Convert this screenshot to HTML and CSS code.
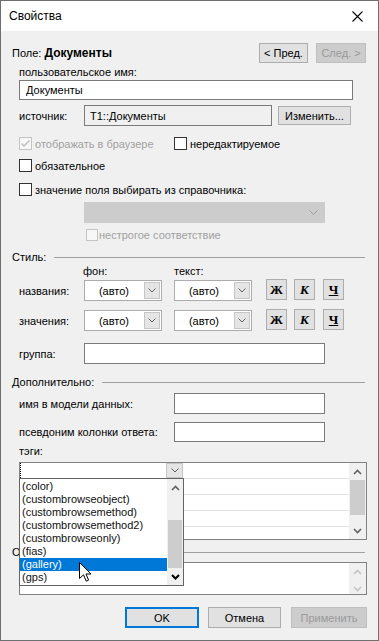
FILE: index.html
```html
<!DOCTYPE html>
<html lang="ru">
<head>
	<meta charset="UTF-8">
	<title>Свойства</title>
	<link rel="stylesheet" href="styles.css">
</head>
<body>
<div class="window">
	<div class="titlebar">
		<span class="title">Свойства</span>
		<span class="close"><svg width="11" height="11" viewBox="0 0 11 11"><path d="M0.5 0.5L10.5 10.5M10.5 0.5L0.5 10.5" stroke="#000" stroke-width="1.1"/></svg></span>
	</div>
	<div class="content">
		<div class="row r-head">
			<span class="field">Поле: <b>Документы</b></span>
			<button class="btn b-prev" type="button">&lt; Пред.</button>
			<button class="btn b-next" type="button" disabled>След. &gt;</button>
		</div>

		<div class="row r-name-label indent">пользовательское имя:</div>
		<div class="row r-name indent"><input class="edit e-name" type="text" value="Документы"></div>

		<div class="row r-source indent">
			<span class="lbl">источник:</span>
			<input class="edit e-source" type="text" value="T1::Документы" readonly>
			<button class="btn b-change" type="button">Изменить...</button>
		</div>

		<div class="row r-chk1 indent">
			<span class="chk w155 off"><span class="box dis"><svg width="11" height="11" viewBox="0 0 11 11"><path d="M1.5 5.5L4 8L9.5 2.5" fill="none" stroke="#bcbcbc" stroke-width="1.4"/></svg></span>отображать в браузере</span>
			<span class="chk"><span class="box"></span>нередактируемое</span>
		</div>
		<div class="row r-chk2 indent">
			<span class="chk"><span class="box"></span>обязательное</span>
		</div>
		<div class="row r-chk3 indent">
			<span class="chk"><span class="box"></span>значение поля выбирать из справочника:</span>
		</div>
		<div class="row r-lookup">
			<span class="sel sel-dis"><span class="sel-text"></span><svg width="9" height="5" viewBox="0 0 9 5"><path d="M0.5 0.5L4.5 4.5L8.5 0.5" fill="none" stroke="#9c9c9c"/></svg></span>
		</div>
		<div class="row r-strict">
			<span class="chk off"><span class="box box-sm dis"></span>нестрогое соответствие</span>
		</div>

		<div class="row sect r-style-h">Стиль:</div>
		<div class="row r-cols">
			<span class="col-bg">фон:</span>
			<span>текст:</span>
		</div>
		<div class="row r-sel r-sel1 indent">
			<span class="lbl">названия:</span>
			<span class="sel"><span class="sel-text">(авто)</span><span class="sel-btn"><svg width="8" height="5" viewBox="0 0 8 5"><path d="M0.5 0.5L4 4L7.5 0.5" fill="none" stroke="#606060"/></svg></span></span>
			<span class="sel sel2"><span class="sel-text">(авто)</span><span class="sel-btn"><svg width="8" height="5" viewBox="0 0 8 5"><path d="M0.5 0.5L4 4L7.5 0.5" fill="none" stroke="#606060"/></svg></span></span>
			<span class="fmt f-b">Ж</span>
			<span class="fmt f-i">К</span>
			<span class="fmt f-u">Ч</span>
		</div>
		<div class="row r-sel r-sel2 indent">
			<span class="lbl">значения:</span>
			<span class="sel"><span class="sel-text">(авто)</span><span class="sel-btn"><svg width="8" height="5" viewBox="0 0 8 5"><path d="M0.5 0.5L4 4L7.5 0.5" fill="none" stroke="#606060"/></svg></span></span>
			<span class="sel sel2"><span class="sel-text">(авто)</span><span class="sel-btn"><svg width="8" height="5" viewBox="0 0 8 5"><path d="M0.5 0.5L4 4L7.5 0.5" fill="none" stroke="#606060"/></svg></span></span>
			<span class="fmt f-b">Ж</span>
			<span class="fmt f-i">К</span>
			<span class="fmt f-u">Ч</span>
		</div>
		<div class="row r-group indent">
			<span class="lbl">группа:</span>
			<input class="edit e-group" type="text">
		</div>

		<div class="row sect r-extra-h">Дополнительно:</div>
		<div class="row r-model indent">
			<span class="lbl-wide">имя в модели данных:</span>
			<input class="edit e-model" type="text">
		</div>
		<div class="row r-alias indent">
			<span class="lbl-wide">псевдоним колонки ответа:</span>
			<input class="edit e-model" type="text">
		</div>
		<div class="row r-tags-h indent">тэги:</div>

		<div class="grid-wrap indent">
			<div class="grid">
				<div class="grid-rows">
					<div class="grow">
						<span class="combo"><span class="combo-text"></span><span class="combo-btn"><svg width="8" height="5" viewBox="0 0 8 5"><path d="M0.5 0.5L4 4L7.5 0.5" fill="none" stroke="#606060"/></svg></span></span>
					</div>
					<div class="grow"></div>
					<div class="grow"></div>
					<div class="grow"></div>
					<div class="grow last"></div>
				</div>
				<div class="vscroll">
					<span class="arr"><svg width="9" height="6" viewBox="0 0 9 6"><path d="M1 5L4.5 1.5L8 5" fill="none" stroke="#606060" stroke-width="1.6"/></svg></span>
					<span class="track"><span class="thumb"></span></span>
					<span class="arr"><svg width="9" height="6" viewBox="0 0 9 6"><path d="M1 1L4.5 4.5L8 1" fill="none" stroke="#606060" stroke-width="1.6"/></svg></span>
				</div>

				<div class="dropdown">
					<div class="items">
						<div class="item">(color)</div>
						<div class="item">(custombrowseobject)</div>
						<div class="item">(custombrowsemethod)</div>
						<div class="item">(custombrowsemethod2)</div>
						<div class="item">(custombrowseonly)</div>
						<div class="item">(fias)</div>
						<div class="item sel-item">(gallery)</div>
						<div class="item">(gps)</div>
					</div>
					<div class="dscroll">
						<span class="darr"><svg width="9" height="6" viewBox="0 0 9 6"><path d="M1 5L4.5 1.5L8 5" fill="none" stroke="#606060" stroke-width="1.6"/></svg></span>
						<span class="dtrack"><span class="dthumb"></span></span>
						<span class="darr"><svg width="9" height="6" viewBox="0 0 9 6"><path d="M1 1L4.5 4.5L8 1" fill="none" stroke="#000" stroke-width="2"/></svg></span>
					</div>
				</div>
				<svg class="cursor" width="13" height="20" viewBox="0 0 13 20"><path d="M0.5 0.5L0.5 16.5L4.5 12.8L7.2 19.2L9.6 18.2L7 12L12 12Z" fill="#fff" stroke="#000" stroke-width="1"/></svg>
			</div>
		</div>

		<!-- подпись группы закрыта раскрытым списком тэгов -->
		<div class="row sect r-desc-h">Описание:</div>
		<div class="memo-wrap indent">
			<div class="memo">
				<div class="memo-text"></div>
				<div class="mscroll">
					<span class="arr"><svg width="9" height="6" viewBox="0 0 9 6"><path d="M1 5L4.5 1.5L8 5" fill="none" stroke="#c4c4c4" stroke-width="1.6"/></svg></span>
					<span class="arr"><svg width="9" height="6" viewBox="0 0 9 6"><path d="M1 1L4.5 4.5L8 1" fill="none" stroke="#c4c4c4" stroke-width="1.6"/></svg></span>
				</div>
			</div>
		</div>

		<div class="row r-buttons">
			<button class="btn b-ok" type="button">OK</button>
			<button class="btn b-cancel" type="button">Отмена</button>
			<button class="btn b-apply" type="button" disabled>Применить</button>
		</div>
	</div>
</div>
</body>
</html>
```

FILE: styles.css
```css
* {
	box-sizing: border-box;
}
body {
	margin: 0;
	font-family: "Liberation Sans", Arial, sans-serif;
	font-size: 11px;
	color: #000;
	background: #fff;
}
.window {/*окно диалога*/
	width: 379px;
	height: 641px;
	border: 1px solid #6f6f6f;
	background: #f0f0f0;
	display: flex;
	flex-direction: column;
}
.titlebar {
	height: 30px;
	flex: none;
	background: #fff;
	display: flex;
	align-items: center;
	justify-content: space-between;
	padding-left: 8px;
}
.title {
	font-size: 12px;
}
.close {
	width: 42px;
	height: 30px;
	display: flex;
	align-items: center;
	justify-content: center;
}
.content {
	padding: 0 11px;
}
.row {
	display: flex;
	align-items: center;
	white-space: nowrap;
}
.indent {
	padding-left: 7px;
}

/* кнопки */
.btn {
	font-family: inherit;
	font-size: 11px;
	color: #000;
	background: #e1e1e1;
	border: 1px solid #adadad;
	padding: 0;
	margin: 0;
	height: 20px;
}
.btn:disabled {
	background: #cccccc;
	border-color: #bfbfbf;
	color: #9a9a9a;
}

/* поля ввода */
.edit {
	font-family: inherit;
	font-size: 11px;
	color: #000;
	background: #fff;
	border: 1px solid #7a7a7a;
	padding: 0 0 0 6px;
	margin: 0;
	outline: none;
}

.r-head {
	margin-top: 12px;
	height: 20px;
}
.field {
	flex: 1;
}
.field b {
	font-size: 12px;
}
.b-prev {
	width: 49px;
}
.b-next {
	width: 50px;
	margin-left: 8px;
	margin-right: 1px;
}
.r-name-label {
	margin-top: 1px;
	height: 16px;
}
.r-name {
	height: 20px;
}
.e-name {
	width: 334px;
	height: 20px;
}
.r-source {
	margin-top: 5px;
	height: 21px;
}
.lbl {
	width: 65px;
	flex: none;
}
.lbl-wide {
	width: 155px;
	flex: none;
}
.e-source {
	width: 188px;
	height: 21px;
	background: #f0f0f0;
	padding-left: 5px;
}
.b-change {
	width: 73px;
	height: 19px;
	margin-left: 6px;
}

/* флажки */
.chk {
	display: flex;
	align-items: center;
}
.w155 {
	width: 155px;
}
.off {
	color: #a0a0a0;
}
.box {
	width: 13px;
	height: 13px;
	border: 1px solid #333;
	background: #fff;
	margin-right: 3px;
	display: flex;
	align-items: center;
	justify-content: center;
}
.box.dis {
	border-color: #c4c4c4;
	background: #f7f7f7;
}
.box-sm {
	width: 12px;
	height: 12px;
	margin-right: 1px;
}
.r-chk1 {
	margin-top: 10px;
	height: 15px;
}
.r-chk2 {
	margin-top: 7px;
	height: 15px;
}
.r-chk3 {
	margin-top: 9px;
	height: 15px;
}
.r-lookup {
	margin-top: 5px;
	height: 21px;
	padding-left: 72px;
}
.r-strict {
	margin-top: 4px;
	height: 15px;
	padding-left: 74px;
}

/* выпадающие списки */
.sel {
	display: flex;
	align-items: center;
	width: 78px;
	height: 21px;
	border: 1px solid #acacac;
	background: #fff;
}
.sel-text {
	flex: 1;
	text-align: center;
	padding-top: 1px;
}
.sel-btn {
	width: 16px;
	height: 17px;
	margin: 0 1px;
	background: #e5e5e5;
	border: 1px solid #c6c6c6;
	display: flex;
	align-items: center;
	justify-content: center;
}
.sel2 {
	margin-left: 12px;
}
.sel-dis {
	width: 241px;
	background: #cccccc;
	border-color: #cccccc;
	padding-right: 6px;
}

/* заголовки групп с линией */
.sect::after {
	content: "";
	flex: 1;
	border-top: 1px solid #a0a0a0;
	margin-left: 8px;
	margin-right: 2px;
}
.r-style-h {
	margin-top: 8px;
	height: 14px;
}
.r-cols {
	height: 14px;
	padding-left: 71px;
}
.col-bg {
	width: 91px;
}
.r-sel {
	height: 23px;
}
.r-sel1 {
	margin-top: 1px;
}
.r-sel2 {
	margin-top: 7px;
}
.fmt {/*кнопки Ж К Ч*/
	align-self: flex-start;
	width: 21px;
	height: 21px;
	border: 1px solid #adadad;
	background: #e1e1e1;
	font-family: "Liberation Serif", serif;
	font-weight: bold;
	font-size: 13px;
	display: flex;
	align-items: center;
	justify-content: center;
}
.f-b {
	margin-left: 14px;
}
.f-i {
	margin-left: 7px;
	font-style: italic;
}
.f-u {
	margin-left: 8px;
	text-decoration: underline;
}
.r-group {
	margin-top: 11px;
	height: 21px;
}
.e-group {
	width: 241px;
	height: 21px;
}
.r-extra-h {
	margin-top: 11px;
	height: 14px;
}
.r-model {
	margin-top: 4px;
	height: 21px;
}
.e-model {
	width: 151px;
	height: 100%;
}
.r-alias {
	margin-top: 8px;
	height: 20px;
}
.r-tags-h {
	margin-top: 2px;
	height: 14px;
}

/* таблица тэгов */
.grid-wrap {
	margin-top: 4px;
}
.grid {
	position: relative;
	display: flex;
	height: 78px;
	border: 1px solid #828282;
	background: #fff;
}
.grid-rows {
	flex: 1;
}
.grow {
	height: 16px;
	border-bottom: 1px solid #e3e3e3;
}
.grow.last {
	border-bottom: none;
}
.combo {
	display: flex;
	width: 163px;
	height: 15px;
}
.combo-text {
	flex: 1;
	border-left: 1px dotted #000;
}
.combo-btn {
	width: 17px;
	height: 15px;
	background: #e5e5e5;
	border: 1px solid #c6c6c6;
	display: flex;
	align-items: center;
	justify-content: center;
}
.vscroll, .mscroll {
	width: 17px;
	background: #f0f0f0;
	display: flex;
	flex-direction: column;
}
.mscroll {
	justify-content: space-between;
}
.arr {
	height: 17px;
	flex: none;
	display: flex;
	align-items: center;
	justify-content: center;
}
.track {
	flex: 1;
	padding: 0 1px;
}
.thumb {
	display: block;
	height: 35px;
	background: #cdcdcd;
}

/* раскрытый список */
.dropdown {
	position: absolute;
	left: -1px;
	top: 15px;
	width: 165px;
	height: 108px;
	border: 1px solid #646464;
	background: #fff;
	display: flex;
	z-index: 2;
}
.items {
	flex: 1;
	padding-top: 1px;
}
.item {
	height: 13px;
	line-height: 13px;
	padding-left: 2px;
	color: #111;
}
.sel-item {
	background: #0078d7;
	color: #fff;
}
.dscroll {
	width: 16px;
	background: #f0f0f0;
	display: flex;
	flex-direction: column;
}
.darr {
	height: 17px;
	flex: none;
	display: flex;
	align-items: center;
	justify-content: center;
}
.dtrack {
	flex: 1;
	padding: 0 1px;
}
.dthumb {
	display: block;
	margin-top: 24px;
	height: 48px;
	background: #cdcdcd;
}
.cursor {
	position: absolute;
	left: 59px;
	top: 99px;
	z-index: 3;
}

.r-desc-h {
	margin-top: 5px;
	height: 14px;
}
.memo-wrap {
	margin-top: 3px;
}
.memo {
	display: flex;
	height: 33px;
	border: 1px solid #828282;
	background: #fff;
}
.memo-text {
	flex: 1;
}

.r-buttons {
	margin-top: 12px;
	height: 21px;
	justify-content: flex-end;
}
.r-buttons .btn {
	height: 21px;
}
.b-ok {
	width: 74px;
	margin-right: 9px;
	border: 2px solid #0078d7;
}
.b-cancel {
	width: 73px;
	margin-right: 10px;
}
.b-apply {
	width: 76px;
}
```
